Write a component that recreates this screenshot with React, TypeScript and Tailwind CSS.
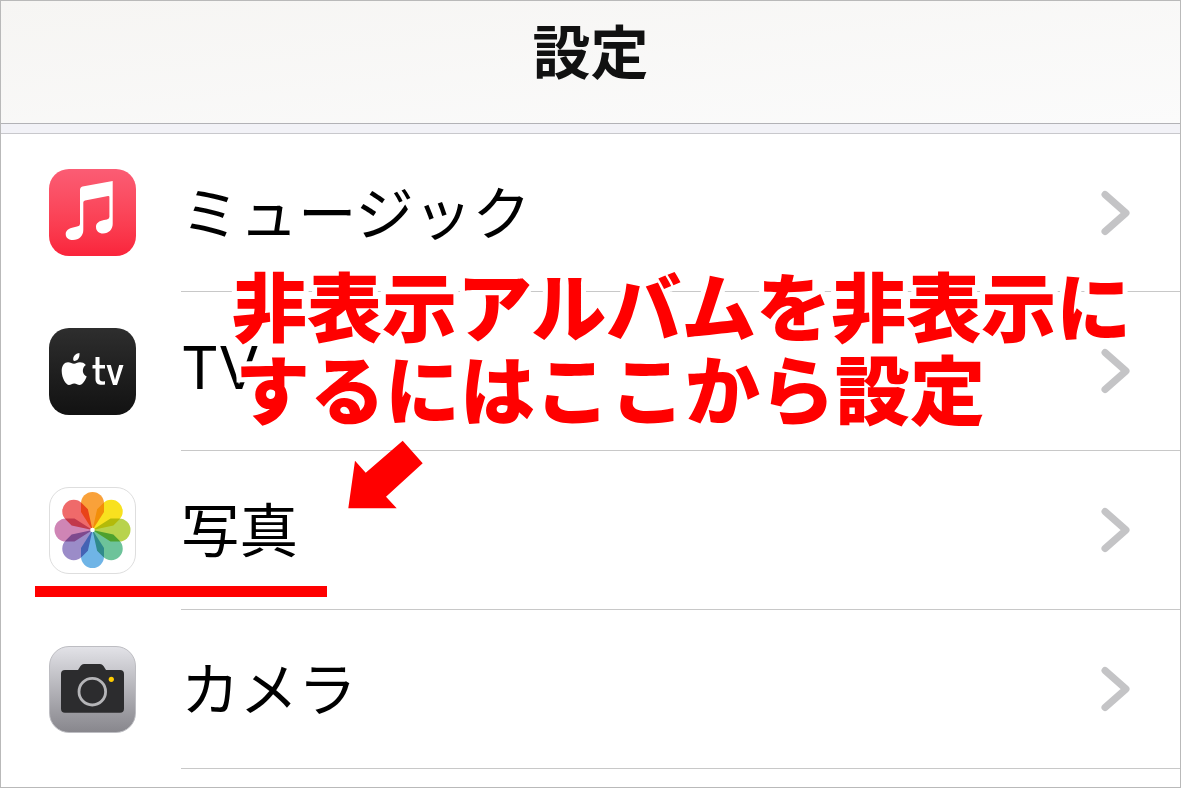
import React from "react";

const JP = "font-['Noto_Sans_CJK_JP','Noto_Sans',sans-serif]";

const MusicIcon: React.FC = () => (
	<div className="h-[87px] w-[87px] shrink-0 rounded-[20px] bg-gradient-to-b from-[#fb5c74] to-[#fa233b]">
		<svg viewBox="0 0 87 87" width="87" height="87" fill="#fff">
			<path d="M63.700 12 L33.500 17.500 Q31 18 31 21 L31 55 Q31 57 28 57.600 L25 58.200 C19.500 59.500 16.700 61.500 16.700 65 C16.700 69 20 71 24 71 C30 71 34.300 67 34.300 61 L34.300 33.500 Q34.300 31.800 36 31.500 L59 27 Q60.400 26.800 60.400 28 L60.400 48 Q60.400 50 58 50.400 L55 51 C50 52 47 54 47 58 C47 62 50 64.500 54 64.500 C60 64.500 63.700 60 63.700 55 Z" />
		</svg>
	</div>
);

const TvIcon: React.FC = () => (
	<div className="h-[87px] w-[87px] shrink-0 rounded-[20px] bg-gradient-to-b from-[#2e2e2e] to-[#121212]">
		<svg viewBox="0 0 87 87" width="87" height="87" fill="#fff">
			<path d="M25.500 33 C27.800 33 29.800 31 30.200 28.800 C30.500 27.500 30.600 26 30.400 25 C27.500 25.300 24.600 27.500 24.200 30.800 C24.100 31.500 24.200 33 25.500 33 Z" />
			<path d="M31 34.300 C28 34.300 27 35.800 25 35.800 C23 35.800 21.500 34.300 19 34.300 C15.500 34.300 12.700 37.500 12.700 43 C12.700 50 17 57 20 57 C22 57 23 55.600 25.200 55.600 C27.500 55.600 28.500 57 30.500 57 C33.500 57 36.500 52 37.700 48.500 C33 46.500 32.500 40 36.800 37 C35.300 35 33 34.300 31 34.300 Z" />
			<path d="M46.500 29 L50.500 29 L50.500 37 L56 37 L56 40.500 L50.500 40.500 L50.500 50.500 C50.500 53 52.500 53.800 56 53.300 L56 56.600 C49.500 57.600 46.500 55.800 46.500 51 L46.500 40.500 L43.500 40.500 L43.500 37 L46.500 37 Z" />
			<path d="M57.500 37 L61.800 37 L66 52 L70.200 37 L74.500 37 L68 57 L64 57 Z" />
		</svg>
	</div>
);

const PETALS = [
	{ angle: 0, color: "#f9a13a" },
	{ angle: 45, color: "#f8e11f" },
	{ angle: 90, color: "#b8d34c" },
	{ angle: 135, color: "#6dc39a" },
	{ angle: 180, color: "#6fb4e6" },
	{ angle: 225, color: "#9b8cc8" },
	{ angle: 270, color: "#cf85b5" },
	{ angle: 315, color: "#ef6a6a" },
];

const PhotosIcon: React.FC = () => (
	<div className="h-[87px] w-[87px] shrink-0 rounded-[20px] border border-[#dedede] bg-white">
		<svg viewBox="0 0 85 85" width="85" height="85">
			<g style={{ isolation: "isolate" }}>
				{PETALS.map((p) => (
					<path
						key={p.angle}
						d="M0 0 L-11.500 -18 L-11.500 -26.500 A11.500 11.500 0 0 1 11.500 -26.500 L11.500 -18 Z"
						fill={p.color}
						transform={`translate(42.500 42) rotate(${p.angle})`}
						style={{ mixBlendMode: "multiply" }}
					/>
				))}
			</g>
			<circle cx="42.500" cy="42" r="2.300" fill="#fff" />
		</svg>
	</div>
);

const CameraIcon: React.FC = () => (
	<div className="h-[87px] w-[87px] shrink-0 rounded-[20px] border border-[#bdbdc2] bg-gradient-to-b from-[#e2e2e7] to-[#88878d]">
		<svg viewBox="0 0 85 85" width="85" height="85">
			<path
				d="M15 23 L28 23 L30.500 19 Q32 17 34 17 L50 17 Q52 17 53.500 19 L56 23 L70 23 Q74 23 74 27 L74 61.700 Q74 65.700 70 65.700 L15 65.700 Q11 65.700 11 61.700 L11 27 Q11 23 15 23 Z"
				fill="#2c2c2e"
			/>
			<circle cx="42.300" cy="44.700" r="13.300" fill="none" stroke="#b5b5b8" strokeWidth="2.800" />
			<circle cx="61.300" cy="32.300" r="2.600" fill="#ffcc00" />
		</svg>
	</div>
);

const Chevron: React.FC = () => (
	<svg
		viewBox="0 0 32 46"
		width="32"
		height="46"
		fill="none"
		stroke="#c4c4c6"
		strokeWidth="7"
		strokeLinecap="round"
		strokeLinejoin="round"
	>
		<path d="M5 4.500 L26 23 L5 41.500" />
	</svg>
);

const Row: React.FC<{
	icon: React.ReactNode;
	label: string;
	latin?: boolean;
	short?: boolean;
}> = ({ icon, label, latin, short }) => (
	<div className={`flex pl-12 ${short ? "h-[158px] items-start pt-[35px]" : "h-[159px] items-center"}`}>
		{icon}
		<div
			className={`ml-[45px] flex flex-1 items-center justify-between border-b border-[#c8c8c8] pr-[48px] ${
				short ? "-mt-[35px] h-[158px]" : "h-full"
			}`}
		>
			<span
				className={`mb-[5px] text-[58.500px] leading-none font-normal text-black ${
					latin ? "font-['Inter',sans-serif]" : JP
				}`}
			>
				{label}
			</span>
			<Chevron />
		</div>
	</div>
);

export default function App() {
	return (
		<div className="relative h-[788px] w-[1181px] overflow-hidden border border-[#b9b9b9] bg-white">
			<header className="flex h-[123px] items-center justify-center border-b border-[#b2b2b6] bg-gradient-to-br from-[#f6f5f3] to-[#fbfbfb] pb-[26px]">
				<h1 className={`text-[58px] leading-none font-bold text-[#111] ${JP}`}>設定</h1>
			</header>
			<div className="h-[10px] border-b border-[#c8c8cc] bg-[#f2f2f7]" />
			<Row icon={<MusicIcon />} label="ミュージック" short />
			<Row icon={<TvIcon />} label="TV" latin />
			<Row icon={<PhotosIcon />} label="写真" />
			<Row icon={<CameraIcon />} label="カメラ" />

			{/* Red annotation over the list */}
			<div
				className={`absolute top-[261px] left-[231px] text-[75px] leading-[83px] font-black whitespace-nowrap text-[#ff0000] [-webkit-text-stroke:10px_white] [paint-order:stroke_fill] ${JP}`}
			>
				<div>非表示アルバムを非表示に</div>
				<div className="pl-[3px]">するにはここから設定</div>
			</div>
			<svg
				className="absolute top-[439px] left-[346px]"
				width="78"
				height="70"
				viewBox="0 0 78 70"
				fill="#ff0000"
			>
				<path d="M1.300 68.300 L8 20.700 L18.700 32.700 L55.700 0.700 L75.700 23.300 L39 56.700 L49.700 68.300 Z" />
			</svg>
			<div className="absolute top-[585px] left-[34px] h-[11px] w-[292px] bg-[#ff0000]" />
		</div>
	);
}
